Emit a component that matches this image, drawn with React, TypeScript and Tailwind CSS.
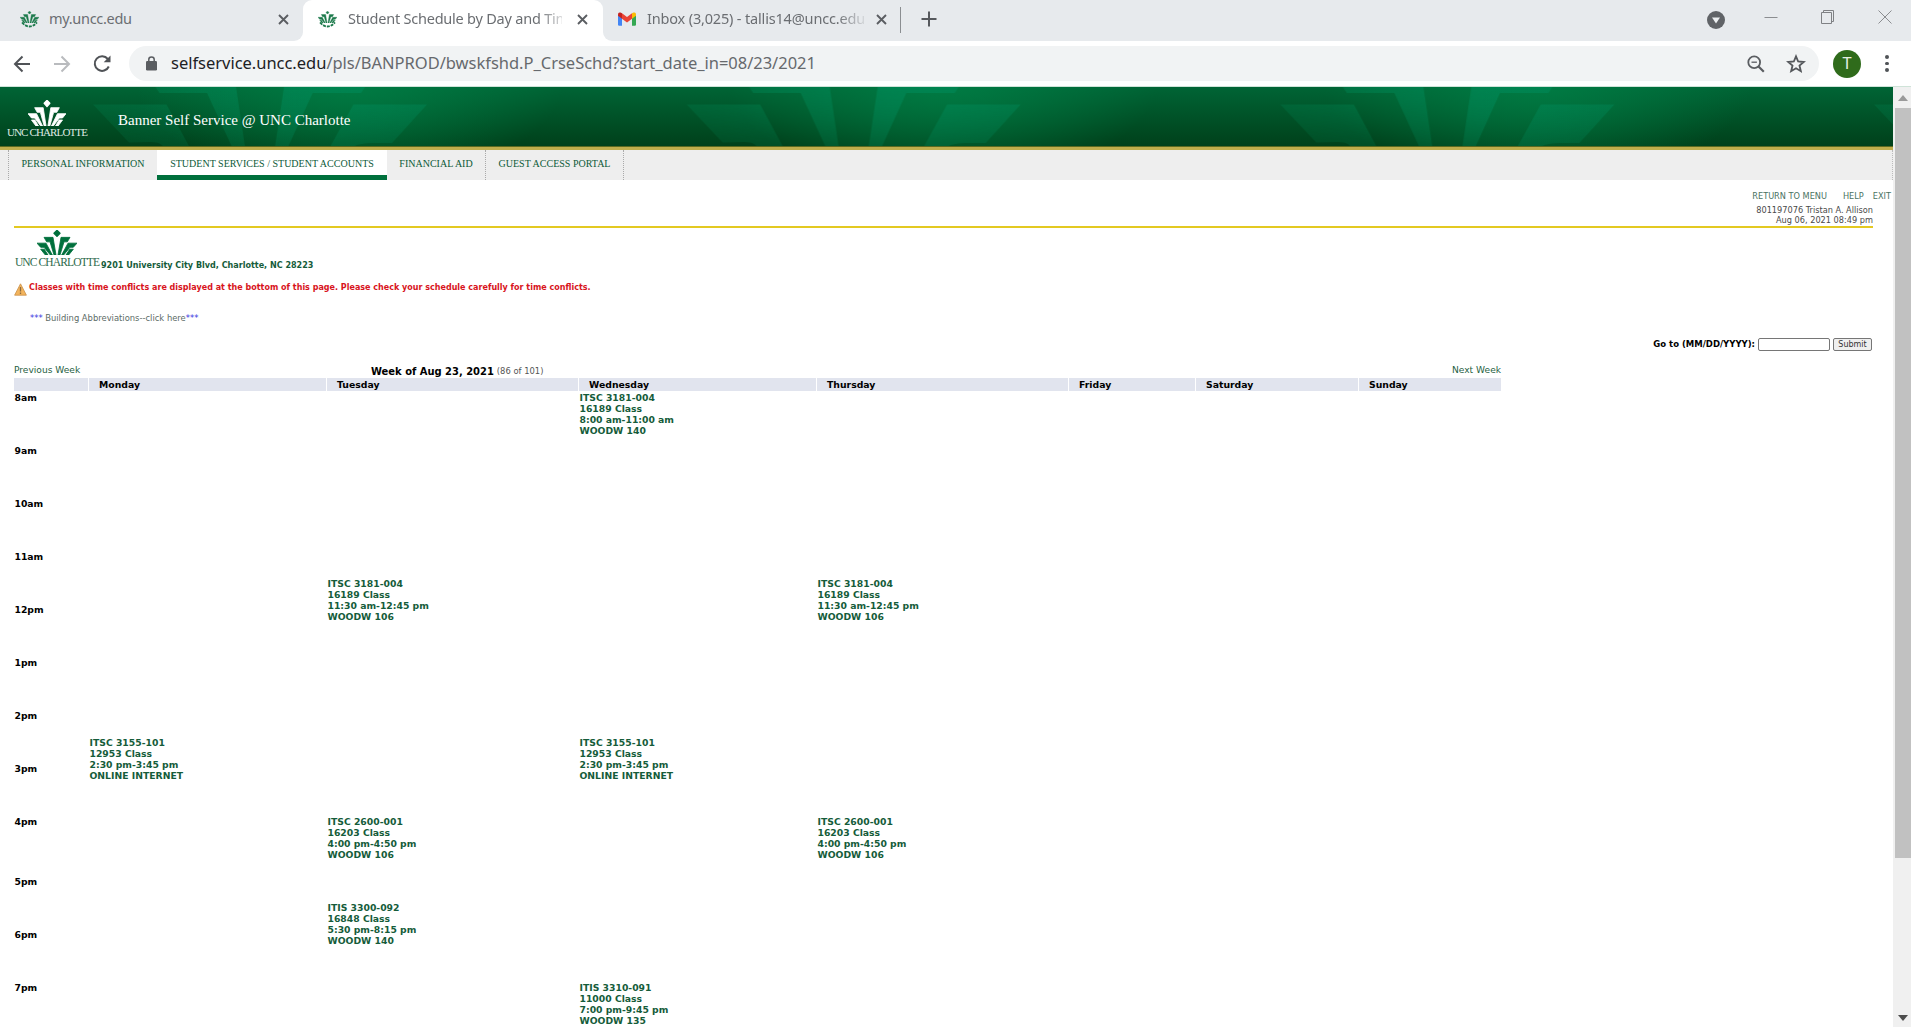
import React from "react";

const LEAVES = [
  "M93 17.5H166.5L189.4 60H163.6C160 55.5 156 55 149 55L129 55.5Z",
  "M155.5 0H236L245 60H232L207 6H159.5Z",
  "M284 0H365L361 6H312.6L288 60H275Z",
  "M353.4 17.5H427L392 56H375C364 56 358 57 353 60H330Z",
];

function BannerArt() {
  return (
    <svg className="absolute inset-0 h-full w-full" aria-hidden="true">
      <defs>
        <linearGradient id="base" x1="0" y1="0" x2="0" y2="1">
          <stop offset="0" stopColor="#006435" />
          <stop offset="1" stopColor="#00401a" />
        </linearGradient>
        <radialGradient id="glow" gradientUnits="userSpaceOnUse" cx="0" cy="0" r="1" gradientTransform="translate(350 -8) scale(215 105)">
          <stop offset="0" stopColor="#007f46" stopOpacity="0.9" />
          <stop offset="1" stopColor="#007f46" stopOpacity="0" />
        </radialGradient>
        <linearGradient id="leaf" gradientUnits="userSpaceOnUse" x1="93" y1="0" x2="427" y2="0">
          <stop offset="0" stopColor="#00905c" stopOpacity="0.25" />
          <stop offset="0.6" stopColor="#009060" stopOpacity="0.5" />
          <stop offset="1" stopColor="#009060" stopOpacity="0.4" />
        </linearGradient>
        <linearGradient id="fade" x1="0" y1="0" x2="0" y2="1">
          <stop offset="0" stopColor="#fff" />
          <stop offset="1" stopColor="#777" />
        </linearGradient>
        <mask id="leafmask" maskUnits="userSpaceOnUse" x="0" y="0" width="594" height="60">
          <rect width="594" height="60" fill="url(#fade)" />
        </mask>
        <pattern id="tile" patternUnits="userSpaceOnUse" width="593.7" height="60">
          <rect width="594" height="60" fill="url(#base)" />
          <rect width="594" height="60" fill="url(#glow)" />
          <g mask="url(#leafmask)">
            {LEAVES.map((d) => (
              <path key={d} d={d} fill="url(#leaf)" />
            ))}
          </g>
        </pattern>
      </defs>
      <rect width="100%" height="60" fill="url(#tile)" />
      <rect y="59" width="100%" height="1" fill="#5a6a20" />
    </svg>
  );
}

function Crown({ className }: { className: string }) {
  const half = (
    <>
      <path d="M21 23H48L57 78H51L39 37H29Z" />
      <path d="M0 41H27L46 78H40L21 54H11Z" />
      <path d="M11 60H22L33 78H25Z" />
    </>
  );
  return (
    <svg viewBox="0 0 120 78" preserveAspectRatio="none" fill="currentColor" stroke="currentColor" strokeWidth="2.5" className={className} aria-hidden="true">
      <path d="M60 1L69 10L60 20L51 10Z" strokeWidth="4" strokeLinejoin="round" />
      {half}
      <g transform="translate(120 0) scale(-1 1)">{half}</g>
    </svg>
  );
}

function Favicon() {
  return (
    <span className="flex w-[19px] flex-col items-center text-[#1c7a4b]">
      <Crown className="h-3 w-[19px]" />
      <svg viewBox="0 0 19 6" className="-mt-px h-1.5 w-[19px]" fill="none" stroke="currentColor" strokeWidth="1.8" aria-hidden="true">
        <path d="M2 0.5Q9.5 8.500 17 0.500" strokeDasharray="3 1" />
      </svg>
    </span>
  );
}

function TabClose() {
  return (
    <svg viewBox="0 0 11 11" className="h-[11px] w-[11px] shrink-0" stroke="#5b5e62" strokeWidth="1.9" aria-hidden="true">
      <path d="M1 1L10 10M10 1L1 10" />
    </svg>
  );
}

function Gmail() {
  return (
    <svg viewBox="0 0 18 13.500" className="h-[14px] w-[18px] shrink-0" aria-hidden="true">
      <path d="M0 3V12.300Q0 13.500 1.200 13.500H4V5Z" fill="#4285f4" />
      <path d="M18 3V12.300Q18 13.500 16.800 13.500H14V5Z" fill="#34a853" />
      <path d="M14 1L15.500 0.300Q18 -0.400 18 2.200V3.500L14 6.500Z" fill="#fbbc04" />
      <path d="M4 1L2.500 0.300Q0 -0.400 0 2.200V3.500L4 6.500Z" fill="#c5221f" />
      <path d="M4 1L9 4.800L14 1V6.500L9 10.300L4 6.500Z" fill="#ea4335" />
    </svg>
  );
}

function TabStrip() {
  return (
    <div className="flex h-[41px] shrink-0 bg-[#e7eaed] font-['Noto_Sans','Open_Sans',sans-serif] text-[14.5px] text-[#6b6e72]">
      <div className="w-[303px] bg-white">
        <div className="flex h-[41px] items-center rounded-br-[9px] bg-[#e7eaed] pb-[3px] pl-5 pr-[14px]">
          <Favicon />
          <span className="ml-2.5 flex-1 whitespace-nowrap tracking-[-0.3px]">my.uncc.edu</span>
          <TabClose />
        </div>
      </div>
      <div className="w-[300px] bg-[#e7eaed]">
        <div className="flex h-[41px] items-center rounded-t-[9px] bg-white pb-[3px] pl-[15px] pr-[15px]">
          <Favicon />
          <span className="ml-[11px] mr-[15px] w-[219px] overflow-hidden whitespace-nowrap tracking-[-0.22px] [mask-image:linear-gradient(to_right,black_190px,transparent_222px)]">
            Student Schedule by Day and Time
          </span>
          <TabClose />
        </div>
      </div>
      <div className="flex-1 bg-white">
        <div className="flex h-[41px] items-center rounded-bl-[9px] bg-[#e7eaed] pb-[3px] pl-[15px]">
          <Gmail />
          <span className="ml-[11px] mr-[11px] w-[218px] overflow-hidden whitespace-nowrap tracking-[-0.17px] [mask-image:linear-gradient(to_right,black_190px,transparent_222px)]">
            Inbox (3,025) - tallis14@uncc.edu
          </span>
          <TabClose />
          <span className="ml-[13px] mt-0.5 h-[26px] w-px bg-[#8b8e91]" />
          <svg viewBox="0 0 16 16" className="ml-5 h-4 w-4" stroke="#56595d" strokeWidth="2" aria-hidden="true">
            <path d="M8 0.500V15.500M0.500 8H15.500" />
          </svg>
          <div className="ml-auto flex items-center pr-[19px]">
            <svg viewBox="0 0 18 18" className="mt-0.5 h-[18px] w-[18px]" aria-hidden="true">
              <circle cx="9" cy="9" r="9" fill="#606367" />
              <path d="M5 6.500H13L9 12.500Z" fill="#eceff1" />
            </svg>
            <svg viewBox="0 0 14 14" className="-mt-[5px] ml-[39px] h-3.5 w-3.5" stroke="#8b8d90" aria-hidden="true">
              <path d="M0.500 7.500H13.500" />
            </svg>
            <svg viewBox="0 0 14 14" className="-mt-[5px] ml-[43px] h-3.5 w-3.5" fill="none" stroke="#7f8184" aria-hidden="true">
              <path d="M0.500 2.500H10.500V13.500H0.500ZM2.500 2.500V0.500H12.500V11.500H10.500" />
            </svg>
            <svg viewBox="0 0 14 14" className="-mt-[5px] ml-[43px] h-3.5 w-3.5" stroke="#8b8d90" aria-hidden="true">
              <path d="M0.500 0.500L13.500 13.500M13.500 0.500L0.500 13.500" />
            </svg>
          </div>
        </div>
      </div>
    </div>
  );
}

function Toolbar() {
  return (
    <div className="flex h-[46px] shrink-0 items-center border-b border-[#cfe3d8] bg-white pl-[13px] font-['Noto_Sans','Open_Sans',sans-serif]">
      <svg viewBox="0 0 18 18" className="h-[18px] w-[18px]" fill="none" stroke="#505357" strokeWidth="2" aria-hidden="true">
        <path d="M17 9H2.500M9.500 1.500L2 9L9.500 16.500" />
      </svg>
      <svg viewBox="0 0 18 18" className="ml-[22px] h-[18px] w-[18px]" fill="none" stroke="#b9bbbe" strokeWidth="2" aria-hidden="true">
        <path d="M1 9H15.500M8.500 1.500L16 9L8.500 16.500" />
      </svg>
      <svg viewBox="0 0 18 18" className="ml-[22px] h-[18px] w-[18px]" fill="none" stroke="#505357" strokeWidth="2" aria-hidden="true">
        <path d="M14.800 4A7.300 7.300 0 1 0 15.800 11.500" />
        <path d="M17.500 0.500V7.300H10.700Z" fill="#505357" stroke="none" />
      </svg>
      <div className="ml-[18px] flex h-[35px] w-[1690px] items-center rounded-full bg-[#f1f3f4] pl-[17px] pr-[13px]">
        <svg viewBox="0 0 11 15" className="h-[15px] w-[11px]" aria-hidden="true">
          <rect y="5" width="11" height="9.500" rx="1.200" fill="#5a5d61" />
          <path d="M2.800 6V3.500Q2.800 1 5.500 1Q8.200 1 8.200 3.500V6" fill="none" stroke="#5a5d61" strokeWidth="1.500" />
        </svg>
        <span className="ml-[14px] flex-1 whitespace-nowrap text-[16.5px] tracking-[-0.02px] text-[#66696d]">
          <span className="text-[#202124]">selfservice.uncc.edu</span>/pls/BANPROD/bwskfshd.P_CrseSchd?start_date_in=08/23/2021
        </span>
        <svg viewBox="0 0 18 18" className="h-[18px] w-[18px]" fill="none" stroke="#5a5d61" strokeWidth="1.800" aria-hidden="true">
          <circle cx="7.200" cy="7.200" r="5.900" />
          <path d="M11.500 11.500L16.800 16.800" strokeWidth="2.200" />
          <path d="M4.500 7.200H9.900" strokeWidth="1.300" />
        </svg>
        <svg viewBox="0 0 24 24" className="ml-[21px] h-[20px] w-[20px]" fill="none" stroke="#55585c" strokeWidth="2.200" aria-hidden="true">
          <path d="M12 2.800L14.600 9L21.300 9.600L16.200 14L17.800 20.600L12 17.100L6.200 20.600L7.800 14L2.700 9.600L9.400 9Z" />
        </svg>
      </div>
      <span className="ml-[14px] flex h-7 w-7 items-center justify-center rounded-full bg-[#2f6b1b] font-['Roboto',sans-serif] text-[16px] text-[#e6efe2]">T</span>
      <div className="ml-[24px] flex flex-col gap-[3px]">
        <span className="h-[3.5px] w-[3.5px] rounded-full bg-[#505357]" />
        <span className="h-[3.5px] w-[3.5px] rounded-full bg-[#505357]" />
        <span className="h-[3.5px] w-[3.5px] rounded-full bg-[#505357]" />
      </div>
    </div>
  );
}

function Banner() {
  return (
    <header className="relative flex h-[63px] shrink-0 border-b-[3px] border-[#bfae4c] font-['Liberation_Serif',serif] text-white">
      <BannerArt />
      <div className="relative ml-[7px] flex w-[80px] flex-col items-center pt-[13px]">
        <Crown className="h-[26px] w-[38px]" />
        <span className="mt-[1px] whitespace-nowrap text-[11px] leading-[11px] tracking-[-0.87px] text-[#dfe9e2]">UNC CHARLOTTE</span>
      </div>
      <h1 className="relative ml-[31px] mt-[24px] whitespace-nowrap text-[15px] leading-[18px]">Banner Self Service @ UNC Charlotte</h1>
    </header>
  );
}

const NAV = [
  { label: "PERSONAL INFORMATION", box: "w-[149px] border-l" },
  { label: "STUDENT SERVICES / STUDENT ACCOUNTS", box: "w-[230px]", active: true },
  { label: "FINANCIAL AID", box: "w-[99px] border-r" },
  { label: "GUEST ACCESS PORTAL", box: "w-[138px] border-r" },
];

function Nav() {
  return (
    <nav className="flex h-[30px] shrink-0 border-r border-dotted border-[#bbb] bg-[#eee] pl-2 font-['Liberation_Serif',serif] text-[10px] tracking-[0.01px] text-[#0c5a38]">
      {NAV.map((n) =>
        n.active ? (
          <a key={n.label} className="flex w-[230px] flex-col bg-white text-center">
            <span className="h-[25px] whitespace-nowrap leading-[27px]">{n.label}</span>
            <span className="h-[5px] bg-[#00703c]" />
          </a>
        ) : (
          <a key={n.label} className={`${n.box} whitespace-nowrap border-dotted border-[#aaa] text-center leading-[27px]`}>
            {n.label}
          </a>
        ),
      )}
    </nav>
  );
}

const DAYS = ["Monday", "Tuesday", "Wednesday", "Thursday", "Friday", "Saturday", "Sunday"];
const HOURS = ["8am", "9am", "10am", "11am", "12pm", "1pm", "2pm", "3pm", "4pm", "5pm", "6pm", "7pm"];

/* start counts half-hour rows from 8am */
const CLASSES = [
  { day: 2, start: 0, span: 6, lines: ["ITSC 3181-004", "16189 Class", "8:00 am-11:00 am", "WOODW 140"] },
  { day: 1, start: 7, span: 3, lines: ["ITSC 3181-004", "16189 Class", "11:30 am-12:45 pm", "WOODW 106"] },
  { day: 3, start: 7, span: 3, lines: ["ITSC 3181-004", "16189 Class", "11:30 am-12:45 pm", "WOODW 106"] },
  { day: 0, start: 13, span: 3, lines: ["ITSC 3155-101", "12953 Class", "2:30 pm-3:45 pm", "ONLINE INTERNET"] },
  { day: 2, start: 13, span: 3, lines: ["ITSC 3155-101", "12953 Class", "2:30 pm-3:45 pm", "ONLINE INTERNET"] },
  { day: 1, start: 16, span: 2, lines: ["ITSC 2600-001", "16203 Class", "4:00 pm-4:50 pm", "WOODW 106"] },
  { day: 3, start: 16, span: 2, lines: ["ITSC 2600-001", "16203 Class", "4:00 pm-4:50 pm", "WOODW 106"] },
  { day: 1, start: 19, span: 4, lines: ["ITIS 3300-092", "16848 Class", "5:30 pm-8:15 pm", "WOODW 140"] },
  { day: 2, start: 22, span: 2, lines: ["ITIS 3310-091", "11000 Class", "7:00 pm-9:45 pm", "WOODW 135"] },
];

function Schedule() {
  return (
    <section className="w-[1487px]">
      <div className="flex h-[16px] items-center text-[9.1px] leading-[11px]">
        <a className="w-[357px] text-[#1f5f43]">Previous Week</a>
        <span className="whitespace-nowrap pt-0.5 text-[9.95px] font-bold text-black">Week of Aug 23, 2021</span>
        <span className="ml-[3px] whitespace-nowrap pt-0.5 text-[8.4px] text-[#555]">(86 of 101)</span>
        <a className="ml-auto text-[#1f5f43]">Next Week</a>
      </div>
      <div className="grid grid-cols-[74px_237px_251px_237px_251px_126px_162px_142px] gap-x-px text-[9.3px] font-bold leading-[13px] text-black">
        <span className="h-[13px] bg-[#e1e4ee]" />
        {DAYS.map((d) => (
          <span key={d} className="h-[13px] bg-[#e1e4ee] pl-2.5">
            {d}
          </span>
        ))}
      </div>
      <div className="mt-px grid grid-cols-[75px_238px_252px_238px_252px_127px_163px_142px] grid-rows-[repeat(8,27px_26px)_30px_30px_26px_27px_27px_26px_27px_26px] text-[9.25px] font-bold leading-[11px]">
        {HOURS.map((h, i) => (
          <span key={h} className="pl-[0.5px] text-black" style={{ gridColumn: 1, gridRow: i * 2 + 1 }}>
            {h}
          </span>
        ))}
        {CLASSES.map((c) => (
          <a
            key={`${c.day}-${c.start}`}
            className="flex flex-col whitespace-nowrap pl-[0.5px] text-[#155c3a]"
            style={{ gridColumn: c.day + 2, gridRow: `${c.start + 1} / span ${c.span}` }}
          >
            {c.lines.map((l) => (
              <span key={l}>{l}</span>
            ))}
          </a>
        ))}
      </div>
    </section>
  );
}

function Content() {
  return (
    <main className="flex flex-1 flex-col pl-[14px] pr-[20px] font-['DejaVu_Sans',sans-serif]">
      <div className="-mr-[18px] mt-[11px] flex h-[11px] justify-end whitespace-nowrap text-[8.2px] leading-[11px] text-[#4a7362]">
        <a>RETURN TO MENU</a>
        <a className="ml-4">HELP</a>
        <a className="ml-[9px]">EXIT</a>
      </div>
      <div className="mt-[3px] h-[21px] text-right text-[8.2px] leading-[10px] text-[#4a4a4a]">
        <div>801197076 Tristan A. Allison</div>
        <div>Aug 06, 2021 08:49 pm</div>
      </div>
      <div className="h-0.5 bg-[#e3c921]" />
      <div className="mt-[2px] flex h-[42px]">
        <div className="flex w-[86px] flex-col items-center">
          <Crown className="h-[25px] w-[40px] text-[#00703c]" />
          <span className="mt-[2px] whitespace-nowrap font-['Liberation_Serif',serif] text-[11.5px] leading-[11px] tracking-[-0.87px] text-[#2e6a4c]">
            UNC CHARLOTTE
          </span>
        </div>
        <span className="ml-[1px] mt-[30px] whitespace-nowrap text-[8.05px] font-bold leading-[11px] text-[#155c3a]">
          9201 University City Blvd, Charlotte, NC 28223
        </span>
      </div>
      <div className="mt-[10px] flex h-[14px]">
        <svg viewBox="0 0 13 13" className="mt-px h-[13px] w-[13px]" aria-hidden="true">
          <path d="M6.500 0.800L12.400 12.200H0.600Z" fill="#f3b45c" stroke="#c98f48" strokeWidth="0.800" strokeLinejoin="round" />
          <path d="M6.500 4V8.500M6.500 9.600V11" stroke="#8b6a40" strokeWidth="1.300" />
        </svg>
        <span className="ml-[2px] whitespace-nowrap text-[8.03px] font-bold leading-[12px] text-[#d8141c]">
          Classes with time conflicts are displayed at the bottom of this page. Please check your schedule carefully for time conflicts.
        </span>
      </div>
      <div className="mt-[17px] h-[11px] whitespace-nowrap pl-4 text-[8.4px] leading-[11px] text-[#3a36e0]">
        *** <a className="text-[#5b6b66]">Building Abbreviations--click here</a>***
      </div>
      <form className="mt-[13px] flex h-[14px] items-center justify-end text-[8px]">
        <label className="whitespace-nowrap pt-px text-[8.5px] font-bold text-black">Go to (MM/DD/YYYY):</label>
        <input className="ml-[3px] h-[13px] w-[72px] rounded-[2px] border border-[#767676] bg-white" />
        <button type="button" className="ml-[3px] mr-px h-[13px] w-[39px] rounded-[2px] border border-[#767676] bg-[#efefef] leading-[11px] text-[#333]">
          Submit
        </button>
      </form>
      <div className="mt-[11px]">
        <Schedule />
      </div>
    </main>
  );
}

function Scrollbar() {
  return (
    <div className="flex w-[18px] shrink-0 flex-col items-end bg-[#f0f0f0]">
      <span className="flex h-[21px] w-4 items-center justify-center">
        <svg viewBox="0 0 10 6" className="h-1.5 w-2.5" fill="#9a9a9a" aria-hidden="true">
          <path d="M5 0L10 6H0Z" />
        </svg>
      </span>
      <span className="h-[750px] w-4 bg-[#c1c1c1]" />
      <span className="mb-[6px] mt-auto flex w-4 justify-center">
        <svg viewBox="0 0 10 6" className="h-1.5 w-2.5" fill="#4d4d4d" aria-hidden="true">
          <path d="M5 6L0 0H10Z" />
        </svg>
      </span>
    </div>
  );
}

export default function App() {
  return (
    <div className="flex h-[1027px] w-[1911px] flex-col overflow-hidden bg-white">
      <TabStrip />
      <Toolbar />
      <div className="flex h-[940px]">
        <div className="flex w-[1893px] flex-col overflow-hidden">
          <Banner />
          <Nav />
          <Content />
        </div>
        <Scrollbar />
      </div>
    </div>
  );
}
